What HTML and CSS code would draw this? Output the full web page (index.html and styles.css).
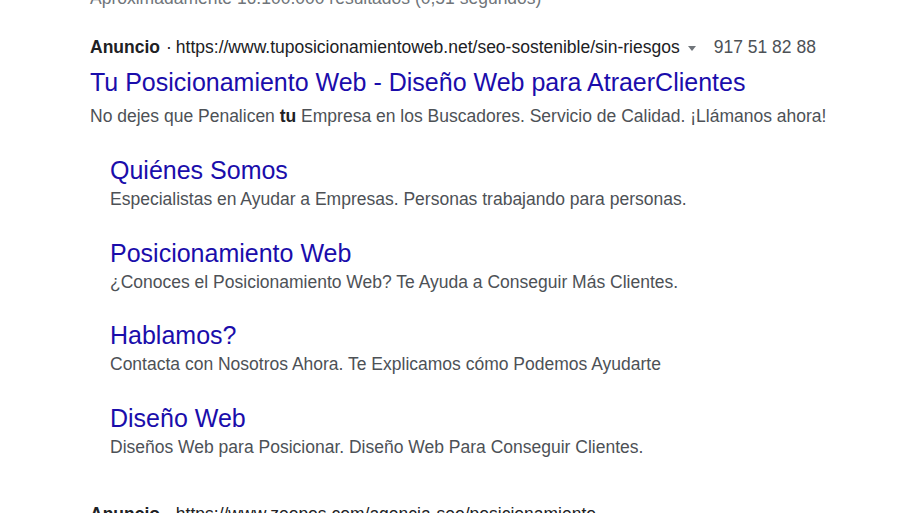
FILE: index.html
```html
<!DOCTYPE html>
<html lang="es">
<head>
<meta charset="utf-8">
<title>Anuncio</title>
<link rel="stylesheet" href="styles.css">
</head>
<body>
<main class="results">
  <div class="stats">Aproximadamente 16.100.000 resultados (0,51 segundos)</div>

  <section class="ad">
    <div class="ad-head">
      <span class="ad-label">Anuncio</span>
      <span class="dot">·</span>
      <span class="ad-url">https://www.tuposicionamientoweb.net/seo-sostenible/sin-riesgos</span>
      <span class="caret"></span>
      <span class="phone">917 51 82 88</span>
    </div>
    <a class="ad-title" href="#">Tu Posicionamiento Web - Diseño Web para AtraerClientes</a>
    <div class="ad-desc">No dejes que Penalicen <b>tu</b> Empresa en los Buscadores. Servicio de Calidad. ¡Llámanos ahora!</div>

    <ul class="sitelinks">
      <li class="sitelink">
        <a class="sl-title" href="#">Quiénes Somos</a>
        <div class="sl-desc">Especialistas en Ayudar a Empresas. Personas trabajando para personas.</div>
      </li>
      <li class="sitelink">
        <a class="sl-title" href="#">Posicionamiento Web</a>
        <div class="sl-desc">¿Conoces el Posicionamiento Web? Te Ayuda a Conseguir Más Clientes.</div>
      </li>
      <li class="sitelink">
        <a class="sl-title" href="#">Hablamos?</a>
        <div class="sl-desc">Contacta con Nosotros Ahora. Te Explicamos cómo Podemos Ayudarte</div>
      </li>
      <li class="sitelink">
        <a class="sl-title" href="#">Diseño Web</a>
        <div class="sl-desc">Diseños Web para Posicionar. Diseño Web Para Conseguir Clientes.</div>
      </li>
    </ul>
  </section>

  <section class="ad next">
    <div class="ad-head">
      <span class="ad-label">Anuncio</span>
      <span class="dot">·</span>
      <span class="ad-url">https://www.zeopos.com/agencia-seo/posicionamiento</span>
    </div>
  </section>
</main>
</body>
</html>
```

FILE: styles.css
```css
html, body {
  margin: 0;
  padding: 0;
  background: #ffffff;
  overflow: hidden;
}
body {
  font-family: "Liberation Sans", Arial, sans-serif;
  color: #4d5156;
}
.results {
  padding-left: 90px;
}
.stats {
  margin-top: -16px;
  font-size: 17.5px;
  line-height: 28px;
  color: #70757a;
  white-space: nowrap;
}
.ad-head {
  margin-top: 21px;
  font-size: 17.5px;
  line-height: 28px;
  color: #202124;
  display: flex;
  align-items: center;
  white-space: nowrap;
}
.ad-label {
  font-weight: bold;
}
.dot {
  margin: 0 4px 0 6px;
}
.caret {
  width: 0;
  height: 0;
  border-left: 4px solid transparent;
  border-right: 4px solid transparent;
  border-top: 5px solid #70757a;
  margin: 2px 18px 0 8px;
}
.phone {
  color: #4d5156;
}
.ad-title {
  display: block;
  margin-top: 5px;
  font-size: 25px;
  line-height: 32px;
  color: #1a0dab;
  text-decoration: none;
  white-space: nowrap;
}
.ad-desc {
  margin-top: 4px;
  font-size: 17.5px;
  line-height: 28px;
  white-space: nowrap;
}
.ad-desc b {
  color: #202124;
  font-weight: bold;
}
.sitelinks {
  list-style: none;
  margin: 24px 0 0 0;
  padding: 0 0 0 20px;
  display: flex;
  flex-direction: column;
  gap: 23.5px;
}
.sl-title {
  display: block;
  font-size: 25px;
  line-height: 32px;
  color: #1a0dab;
  text-decoration: none;
}
.sl-desc {
  margin-top: -1px;
  font-size: 17.5px;
  line-height: 28px;
}
.ad.next .ad-head {
  margin-top: 39px;
}
```
